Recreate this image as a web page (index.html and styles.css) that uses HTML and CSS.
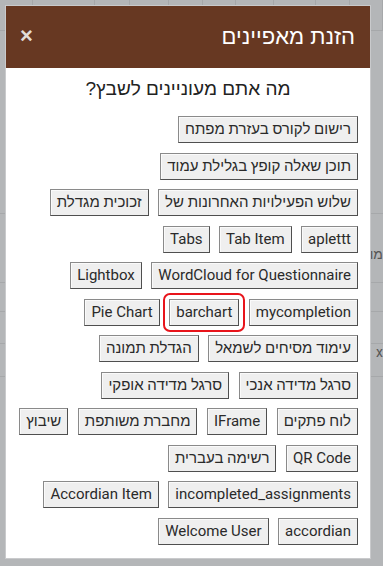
FILE: index.html
```html
<!DOCTYPE html>
<html lang="he" dir="rtl">
<head>
  <meta charset="UTF-8" />
  <meta name="viewport" content="width=device-width, initial-scale=1.0"/>
  <title>הזנת מאפיינים</title>
  <link rel="stylesheet" href="styles.css">
</head>
<body>

  <!-- dimmed page behind the dialog -->
  <div class="page">
    <div class="page-head">
      <span></span><span></span><span></span><span></span><span></span>
      <span></span><span></span><span></span><span></span><span></span>
    </div>
    <div class="page-row r1"></div>
    <div class="page-row r2"><span class="cut">מו</span></div>
    <div class="page-row r3"></div>
    <div class="page-row r4"><span class="cut">x</span></div>
    <div class="page-row r5"></div>
  </div>

  <div class="modal">
    <div class="modal-header">
      <h2 class="modal-title">הזנת מאפיינים</h2>
      <span class="modal-close">&times;</span>
    </div>
    <div class="modal-body">
      <p class="question">מה אתם מעוניינים לשבץ?</p>

      <div class="choices">
        <div class="choice-row">
          <button class="choice">רישום לקורס בעזרת מפתח</button>
        </div>
        <div class="choice-row">
          <button class="choice">תוכן שאלה קופץ בגלילת עמוד</button>
        </div>
        <div class="choice-row">
          <button class="choice">שלוש הפעילויות האחרונות של</button>
          <button class="choice">זכוכית מגדלת</button>
        </div>
        <div class="choice-row">
          <button class="choice">aplettt</button>
          <button class="choice">Tab Item</button>
          <button class="choice">Tabs</button>
        </div>
        <div class="choice-row">
          <button class="choice">WordCloud for Questionnaire</button>
          <button class="choice">Lightbox</button>
        </div>
        <div class="choice-row">
          <button class="choice">mycompletion</button>
          <button class="choice selected">barchart</button>
          <button class="choice">Pie Chart</button>
        </div>
        <div class="choice-row">
          <button class="choice">עימוד מסיחים לשמאל</button>
          <button class="choice">הגדלת תמונה</button>
        </div>
        <div class="choice-row">
          <button class="choice">סרגל מדידה אנכי</button>
          <button class="choice">סרגל מדידה אופקי</button>
        </div>
        <div class="choice-row">
          <button class="choice">לוח פתקים</button>
          <button class="choice">IFrame</button>
          <button class="choice">מחברת משותפת</button>
          <button class="choice">שיבוץ</button>
        </div>
        <div class="choice-row">
          <button class="choice">QR Code</button>
          <button class="choice">רשימה בעברית</button>
        </div>
        <div class="choice-row">
          <button class="choice">incompleted_assignments</button>
          <button class="choice">Accordian Item</button>
        </div>
        <div class="choice-row">
          <button class="choice">accordian</button>
          <button class="choice">Welcome User</button>
        </div>
      </div>
    </div>
  </div>

</body>
</html>
```

FILE: styles.css
```css
html, body {
  height: 100%;
}
body {
  margin: 0;
  font-family: Roboto, "Liberation Sans", sans-serif;
  background: #b4b6b8;
  color: #222;
  overflow: hidden;
}

/* faded page behind the overlay */
.page {
  direction: ltr;
}
.page-head {
  display: flex;
  height: 30px;
  border-bottom: 1px solid #a6a8aa;
}
.page-head span {
  width: 33px;
  border-right: 1px solid #a6a8aa;
}
.page-head span:nth-child(2) { width: 62px; }
.page-head span:nth-child(3) { width: 34px; }
.page-head span:nth-child(4) { width: 39px; }
.page-head span:nth-child(5) { width: 34px; }
.page-head span:nth-child(6) { width: 32px; }
.page-head span:nth-child(7) { width: 38px; }
.page-head span:nth-child(8) { width: 42px; }
.page-row {
  border-bottom: 1px solid #a6a8aa;
  font-size: 14px;
  color: #555;
  text-align: right;
}
.r1 { height: 182px; }
.r2 { height: 68px; line-height: 80px; }
.r3 { height: 28px; }
.r4 { height: 31px; line-height: 80px; }
.r5 { height: 32px; }

/* dialog */
.modal {
  position: absolute;
  top: 6px;
  left: 6px;
  width: 364px;
  height: 552px;
  background: #fff;
  box-shadow: 0 0 0 1px #c9cacc;
  display: flex;
  flex-direction: column;
}
.modal-header {
  background: #673822;
  height: 62px;
  display: flex;
  align-items: center;
  justify-content: space-between;
  padding: 0 15px 0 14px;
}
.modal-title {
  margin: 0;
  color: #fff;
  font-size: 22px;
  font-weight: normal;
  font-family: "Liberation Sans", sans-serif;
}
.modal-close {
  color: #e2dcd8;
  font-size: 22px;
  font-weight: bold;
  font-family: "Liberation Sans", sans-serif;
  line-height: 1;
  margin-top: -2px;
}
.modal-body {
  padding: 10px 12px 0 12px;
}
.question {
  margin: 0 0 16px 0;
  text-align: center;
  font-size: 19px;
  line-height: 22px;
  font-family: "Liberation Sans", sans-serif;
  color: #222;
}
.choices {
  display: flex;
  flex-direction: column;
  gap: 9.5px;
}
.choice-row {
  display: flex;
  gap: 9.5px;
}
.choice {
  position: relative;
  font-family: Roboto, "Liberation Sans", sans-serif;
  font-size: 15px;
  line-height: 17px;
  height: 27px;
  padding: 4px 6px;
  color: #2a2a2a;
  background: #efefef;
  border: 1px solid;
  border-color: #8a8a8a #4f4f4f #4f4f4f #8a8a8a;
  box-shadow: inset 1px 1px 0 #fafafa;
  border-radius: 0;
  white-space: nowrap;
}
.choice.selected::after {
  content: "";
  position: absolute;
  top: -7px;
  bottom: -7px;
  left: -7px;
  right: -7px;
  border: 2px solid #e8141b;
  border-radius: 7px;
}
```
